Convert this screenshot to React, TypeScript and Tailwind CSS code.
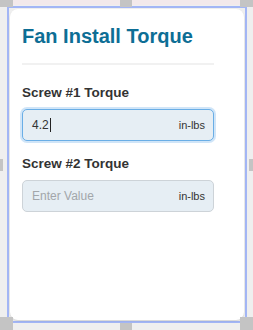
const font = { fontFamily: '"Liberation Sans", Arial, sans-serif' };

function Handle({ className }: { className: string }) {
  return <div className={`absolute bg-[#c4c4c4] ${className}`} />;
}

function TorqueField({
  label,
  value,
  focused,
}: {
  label: string;
  value?: string;
  focused?: boolean;
}) {
  return (
    <div className="flex flex-col">
      <label className="text-[13.5px] leading-4 font-bold text-[#333333]">{label}</label>
      <div
        className={`mt-[8px] flex h-8 items-center justify-between rounded-[5px] bg-[#e6eef4] pl-[9px] pr-[8px] ${
          focused
            ? "border border-[#6aaee6] shadow-[0_0_0_2px_rgba(120,180,235,0.35)]"
            : "border border-[#cdd3d8]"
        }`}
      >
        {value ? (
          <span className="flex items-center text-[12px] text-[#333333]">
            {value}
            <span className="ml-px inline-block h-[14px] w-px bg-[#222]" />
          </span>
        ) : (
          <span className="text-[12px] text-[#a2a6aa]">Enter Value</span>
        )}
        <span className="text-[11px] text-[#333333]">in-lbs</span>
      </div>
    </div>
  );
}

export default function App() {
  return (
    <div style={font} className="relative h-[330px] w-[253px] overflow-hidden bg-[#efefef]">
      <div className="h-[5px] bg-[#f3e9eb]" />
      <div className="ml-[7px] mt-[1px] h-[317px] w-[240px] border-2 border-[#a3b6f5] p-px">
        <div className="h-full rounded-lg bg-white px-3 shadow-[0_1px_2px_rgba(0,0,0,0.12)]">
          <div className="w-[192px] pt-[15px]">
            <h1 className="text-[20px] leading-6 font-bold text-[#0d6e95]">Fan Install Torque</h1>
            <div className="mt-[15px] h-[2px] bg-[#f1f1f1]" />
            <div className="mt-[20px] flex flex-col gap-[15px]">
              <TorqueField label="Screw #1 Torque" value="4.2" focused />
              <TorqueField label="Screw #2 Torque" />
            </div>
          </div>
        </div>
      </div>

      <Handle className="top-0 left-0 h-[7px] w-[13px]" />
      <Handle className="top-0 left-[120px] h-[7px] w-[12px]" />
      <Handle className="top-0 right-0 h-[7px] w-[13px]" />
      <Handle className="left-0 top-[159px] h-[12px] w-[3px]" />
      <Handle className="right-0 top-[159px] h-[12px] w-[4px]" />
      <Handle className="bottom-0 left-0 h-[13px] w-[13px]" />
      <Handle className="bottom-0 left-[120px] h-[7px] w-[12px]" />
      <Handle className="bottom-0 right-0 h-[13px] w-[13px]" />
    </div>
  );
}
